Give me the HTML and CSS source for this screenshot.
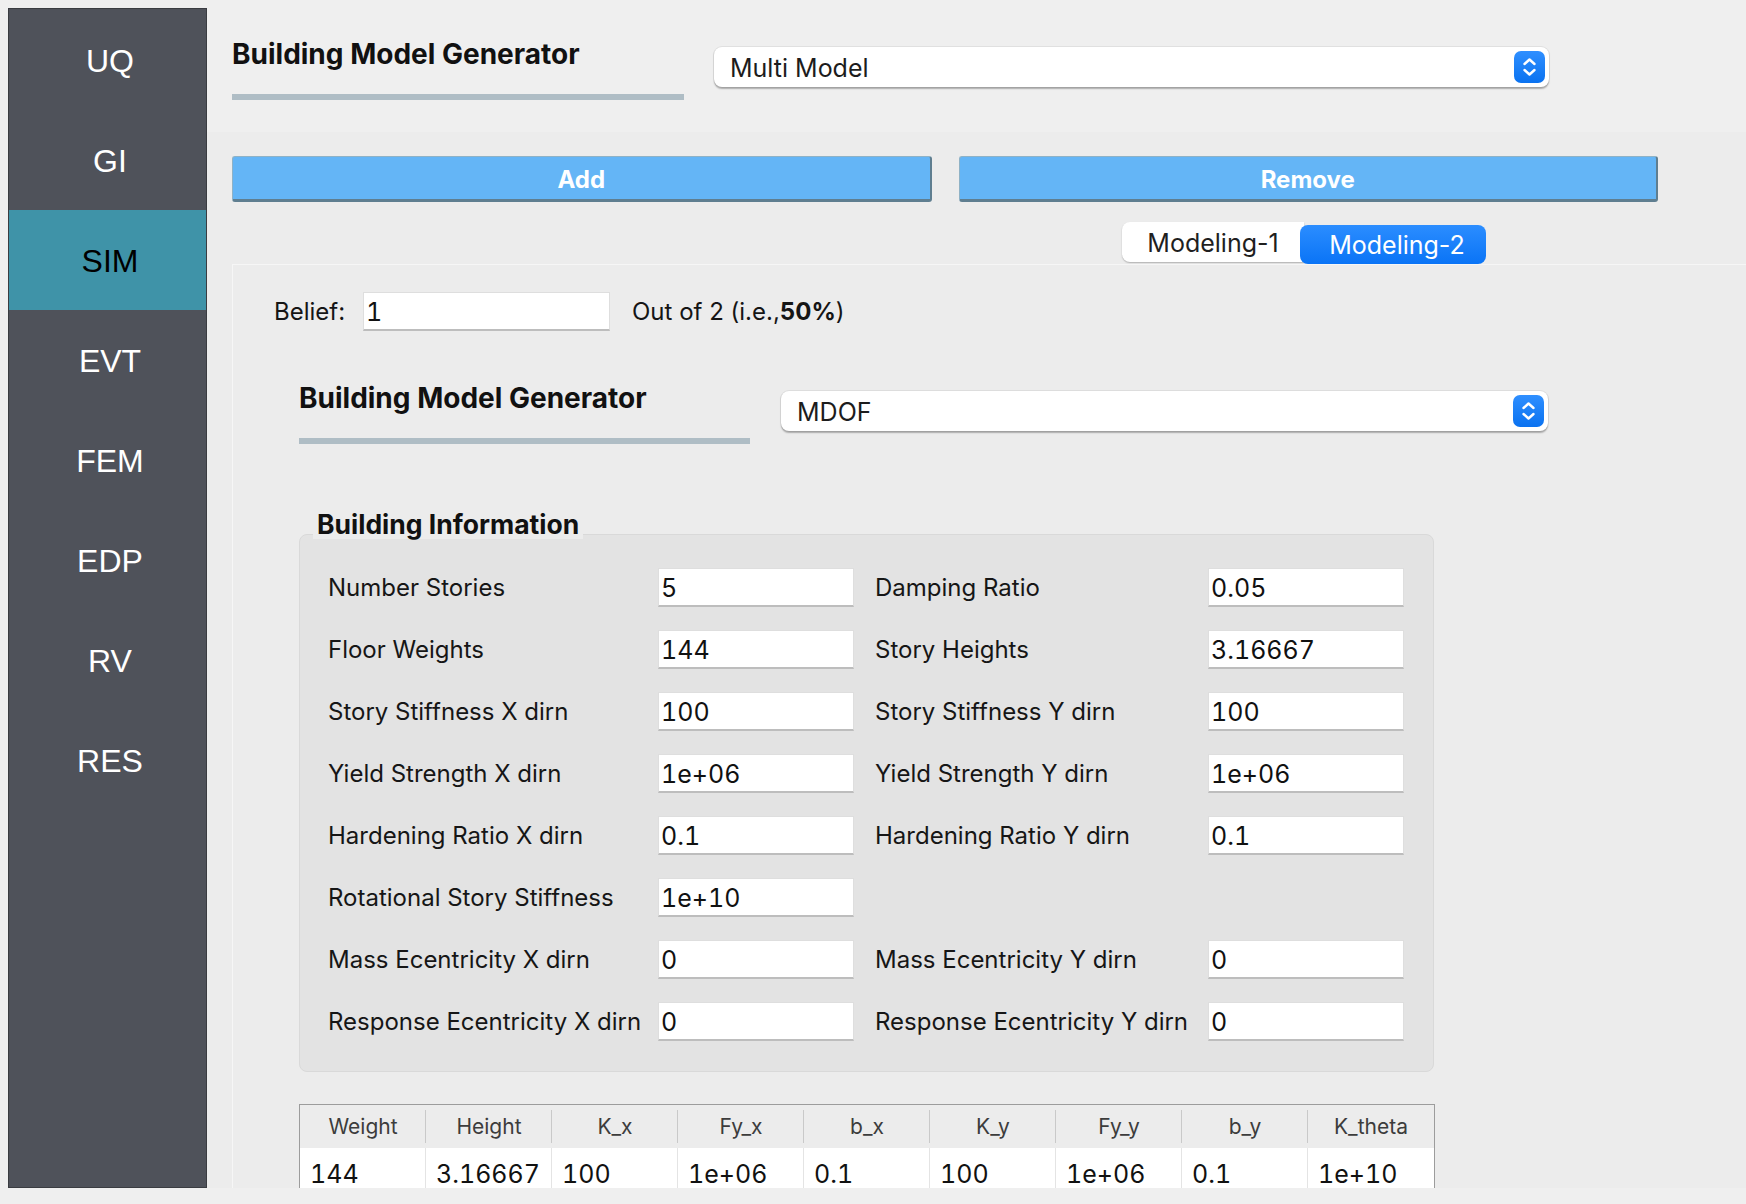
FILE: index.html
```html
<!DOCTYPE html>
<html lang="en">
<head>
<meta charset="utf-8">
<title>Building Model Generator</title>
<link rel="stylesheet" href="styles.css">
</head>
<body>
<div class="app">
  <nav class="sidebar">
    <div class="nav-item">UQ</div>
    <div class="nav-item">GI</div>
    <div class="nav-item active">SIM</div>
    <div class="nav-item">EVT</div>
    <div class="nav-item">FEM</div>
    <div class="nav-item">EDP</div>
    <div class="nav-item">RV</div>
    <div class="nav-item">RES</div>
  </nav>
  <main class="main">
    <header class="top">
      <div class="title-block">
        <div class="title">Building Model Generator</div>
        <div class="title-bar"></div>
      </div>
      <div class="combo combo-top">
        <span class="combo-text">Multi Model</span>
        <span class="combo-arrow"><svg width="31" height="32" viewBox="0 0 31 32"><path d="M10.5 13 L15.5 8.5 L20.5 13 M10.5 19 L15.5 23.5 L20.5 19" fill="none" stroke="#fff" stroke-width="2.4" stroke-linecap="round" stroke-linejoin="round"/></svg></span>
      </div>
    </header>
    <section class="content">
      <div class="btn-row">
        <button class="btn">Add</button>
        <button class="btn">Remove</button>
      </div>
      <div class="tabs">
        <div class="tab">Modeling-1</div>
        <div class="tab tab-active">Modeling-2</div>
      </div>
      <div class="panel">
        <div class="belief-row">
          <span class="belief-label">Belief:</span>
          <input class="field belief-field" value="1">
          <span class="belief-out">Out of 2 (i.e.,<b>50%</b>)</span>
        </div>
        <div class="gen-row">
          <div class="title-block title-block-2">
            <div class="title">Building Model Generator</div>
            <div class="title-bar"></div>
          </div>
          <div class="combo combo-mdof">
            <span class="combo-text">MDOF</span>
            <span class="combo-arrow"><svg width="31" height="32" viewBox="0 0 31 32"><path d="M10.5 13 L15.5 8.5 L20.5 13 M10.5 19 L15.5 23.5 L20.5 19" fill="none" stroke="#fff" stroke-width="2.4" stroke-linecap="round" stroke-linejoin="round"/></svg></span>
          </div>
        </div>
        <div class="group-title">Building Information</div>
        <div class="group-box">
          <div class="form-grid">
            <span class="lbl">Number Stories</span><input class="field" value="5">
            <span class="lbl lbl-2">Damping Ratio</span><input class="field" value="0.05">

            <span class="lbl">Floor Weights</span><input class="field" value="144">
            <span class="lbl lbl-2">Story Heights</span><input class="field" value="3.16667">

            <span class="lbl">Story Stiffness X dirn</span><input class="field" value="100">
            <span class="lbl lbl-2">Story Stiffness Y dirn</span><input class="field" value="100">

            <span class="lbl">Yield Strength X dirn</span><input class="field" value="1e+06">
            <span class="lbl lbl-2">Yield Strength Y dirn</span><input class="field" value="1e+06">

            <span class="lbl">Hardening Ratio X dirn</span><input class="field" value="0.1">
            <span class="lbl lbl-2">Hardening Ratio Y dirn</span><input class="field" value="0.1">

            <span class="lbl">Rotational Story Stiffness</span><input class="field" value="1e+10">
            <span></span><span></span>

            <span class="lbl">Mass Ecentricity X dirn</span><input class="field" value="0">
            <span class="lbl lbl-2">Mass Ecentricity Y dirn</span><input class="field" value="0">

            <span class="lbl">Response Ecentricity X dirn</span><input class="field" value="0">
            <span class="lbl lbl-2">Response Ecentricity Y dirn</span><input class="field" value="0">
          </div>
        </div>
        <div class="table">
          <div class="thead">
            <div class="th">Weight</div>
            <div class="th">Height</div>
            <div class="th">K_x</div>
            <div class="th">Fy_x</div>
            <div class="th">b_x</div>
            <div class="th">K_y</div>
            <div class="th">Fy_y</div>
            <div class="th">b_y</div>
            <div class="th">K_theta</div>
          </div>
          <div class="trow">
            <div class="td">144</div>
            <div class="td">3.16667</div>
            <div class="td">100</div>
            <div class="td">1e+06</div>
            <div class="td">0.1</div>
            <div class="td">100</div>
            <div class="td">1e+06</div>
            <div class="td">0.1</div>
            <div class="td">1e+10</div>
          </div>
        </div>
      </div>
    </section>
  </main>
</div>
</body>
</html>
```

FILE: styles.css
```css
* { box-sizing: border-box; }

html, body {
  margin: 0;
  padding: 0;
}

body {
  width: 1746px;
  height: 1204px;
  overflow: hidden;
  background: #efefef;
  font-family: Inter, "Liberation Sans", sans-serif;
  color: #151515;
}

.app {
  display: flex;
  height: 1188px;
  overflow: hidden;
}

/* ---------- sidebar ---------- */
.sidebar {
  flex: 0 0 199px;
  margin: 8px 0 0 8px;
  border: 1px solid #3a3c41;
  background: #4f525a;
  padding-top: 1px;
}

.nav-item {
  height: 100px;
  display: flex;
  align-items: center;
  justify-content: center;
  padding: 2px 0 0 5px;
  color: #ffffff;
  font-family: "Liberation Sans", Arial, sans-serif;
  font-size: 32px;
}

.nav-item.active {
  background: #3f93a8;
  color: #000000;
}

/* ---------- main ---------- */
.main {
  flex: 1;
  min-width: 0;
  display: flex;
  flex-direction: column;
}

.top {
  flex: none;
  height: 132px;
  background: #efefef;
  display: flex;
  align-items: flex-start;
  padding-left: 25px;
}

.title-block {
  width: 452px;
  padding-top: 37px;
}

.title {
  font-weight: 700;
  font-size: 28px;
  line-height: 34px;
  color: #111;
  white-space: nowrap;
}

.title-bar {
  margin-top: 23px;
  height: 6px;
  background: #afbdc5;
}

.combo {
  position: relative;
  display: flex;
  align-items: center;
  height: 40px;
  background: #ffffff;
  border-radius: 8px;
  box-shadow: 0 0 0 1px rgba(0, 0, 0, 0.06), 0 1.5px 1.5px rgba(0, 0, 0, 0.28);
  padding-left: 16px;
}

.combo-top {
  margin: 47px 0 0 30px;
  width: 835px;
}

.combo-text {
  flex: 1;
  font-size: 25px;
  padding-top: 2px;
  color: #1c1c1c;
}

.combo-arrow {
  width: 31px;
  height: 32px;
  margin-right: 4px;
  border-radius: 7px;
  background: linear-gradient(#2f8fff, #0a72f0);
  display: flex;
}

/* ---------- content ---------- */
.content {
  flex: 1;
  min-height: 0;
  background: #ececec;
  padding: 24px 0 0 25px;
  display: flex;
  flex-direction: column;
}

.btn-row {
  display: flex;
  gap: 27px;
  width: 1426px;
  height: 46px;
}

.btn {
  flex: 1;
  margin: 0;
  background: #64b5f6;
  border-top: 1px solid #8fb2c6;
  border-left: 1px solid #8fb2c6;
  border-right: 2px solid #5f7e90;
  border-bottom: 3px solid #5f7e90;
  border-radius: 3px;
  color: #ffffff;
  font-family: Inter, "Liberation Sans", sans-serif;
  font-weight: 700;
  font-size: 24px;
  padding: 2px 0 0;
}

.tabs {
  margin-top: 20px;
  height: 42px;
  padding-left: 890px;
  display: flex;
  align-items: flex-start;
}

.tab {
  height: 40px;
  width: 182px;
  padding-top: 2px;
  background: #ffffff;
  border-radius: 8px 0 0 8px;
  box-shadow: 0 1px 1.5px rgba(0, 0, 0, 0.25);
  display: flex;
  align-items: center;
  justify-content: center;
  font-size: 25px;
  color: #1f1f1f;
}

.tab-active {
  width: 186px;
  height: 39px;
  margin: 3px 0 0 -4px;
  padding: 0 4px 0 12px;
  border-radius: 8px;
  background: linear-gradient(#2b8dff, #0a74f6);
  color: #ffffff;
  box-shadow: none;
}

.panel {
  flex: 1;
  min-height: 0;
  overflow: hidden;
  background: #ececec;
  border-top: 1px solid #f6f6f6;
  border-left: 1px solid #f6f6f6;
  display: flex;
  flex-direction: column;
}

.belief-row {
  display: flex;
  align-items: center;
  height: 39px;
  margin-top: 27px;
  padding-left: 41px;
  font-size: 24px;
}

.belief-label {
  width: 89px;
}

.belief-field {
  width: 247px;
}

.belief-out {
  margin-left: 22px;
}

.field {
  height: 39px;
  margin: 0;
  background: #ffffff;
  border: 1px solid #dedede;
  border-bottom: 2px solid #bdbdbd;
  border-radius: 0;
  padding: 1px 2px 0;
  font-family: Inter, "Liberation Sans", sans-serif;
  font-size: 25px;
  font-feature-settings: "tnum" 1;
  color: #111;
  outline: none;
}

.gen-row {
  display: flex;
  align-items: flex-start;
  margin-top: 50px;
  padding-left: 66px;
}

.title-block-2 {
  width: 451px;
  padding-top: 0;
}

.title-block-2 .title-bar {
  margin-top: 23px;
}

.combo-mdof {
  margin: 10px 0 0 31px;
  width: 767px;
}

.group-title {
  position: relative;
  z-index: 1;
  align-self: flex-start;
  margin: 65px 0 0 80px;
  padding: 0 4px;
  background: #ececec;
  font-weight: 700;
  font-size: 26.5px;
  line-height: 30px;
  color: #111;
}

.group-box {
  flex: none;
  margin: -5px 0 0 66px;
  width: 1135px;
  height: 538px;
  border: 1px solid #d9d9d9;
  border-radius: 8px;
  background: #e3e3e3;
  padding: 33px 29px 0 28px;
}

.form-grid {
  display: grid;
  grid-template-columns: 330px 196px 354px 196px;
  grid-auto-rows: 39px;
  row-gap: 23px;
  align-items: center;
}

.lbl {
  font-size: 24px;
  color: #161616;
  white-space: nowrap;
}

.lbl-2 {
  padding-left: 21px;
}

.form-grid .field {
  width: 196px;
}

/* ---------- table ---------- */
.table {
  flex: none;
  margin: 32px 0 0 66px;
  width: 1136px;
  border-top: 1px solid #9c9c9c;
  border-left: 1px solid #9c9c9c;
  border-right: 1px solid #9c9c9c;
}

.thead, .trow {
  display: grid;
  grid-template-columns: repeat(9, 126px);
}

.th {
  position: relative;
  height: 43px;
  display: flex;
  align-items: center;
  justify-content: center;
  font-size: 21px;
  color: #3c3c3c;
  background: #ececec;
}

.th::after {
  content: "";
  position: absolute;
  right: 0;
  top: 5px;
  bottom: 5px;
  width: 1px;
  background: #c9c9c9;
}

.th:last-child::after {
  display: none;
}

.trow {
  background: #ffffff;
}

.td {
  height: 40px;
  padding: 14px 0 0 10px;
  line-height: 24px;
  font-size: 25px;
  font-feature-settings: "tnum" 1;
  color: #111;
  border-right: 1px solid #e4e4e4;
}

.td:last-child {
  border-right: none;
}
```
